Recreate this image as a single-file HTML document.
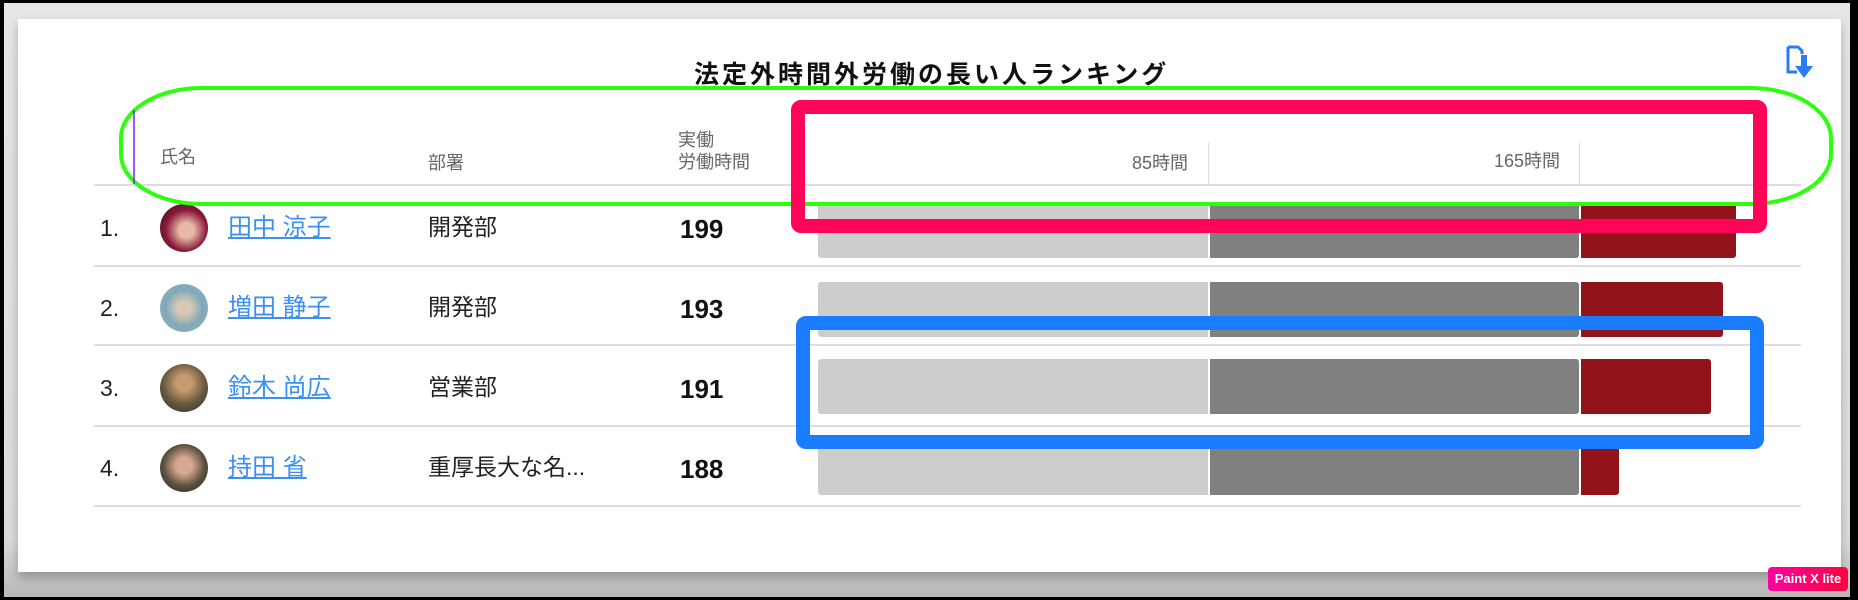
<!DOCTYPE html>
<html><head><meta charset="utf-8"><style>
*{margin:0;padding:0;box-sizing:border-box}
body{width:1858px;height:600px;background:#000;position:relative;overflow:hidden;font-family:"Liberation Sans","Noto Sans CJK JP",sans-serif}
.a{position:absolute}
.frame{left:4px;top:3px;width:1846px;height:594px;background:linear-gradient(#e6e6e6,#dcdcdc 90%,#b8b8b8)}
.card{left:18px;top:19px;width:1823px;height:553px;background:#fff;box-shadow:0 6px 10px rgba(0,0,0,.25)}
.h{color:#666;font-size:18px;line-height:22px}
.line{left:94px;width:1707px;height:2px;background:#ddd}
.num{left:100px;font-size:23px;color:#222;line-height:28px}
.av{left:160px;width:48px;height:48px;border-radius:50%}
.nm{left:228px;font-size:24px;color:#3a8ff2;text-decoration:underline;line-height:28px}
.dp{left:428px;font-size:23px;color:#222;line-height:28px}
.hr{left:680px;font-size:26px;font-weight:bold;color:#111;line-height:28px}
.b1{left:818px;width:390px;height:55px;background:#cdcdcd;border-radius:3px 0 0 3px}
.b2{left:1210px;width:369px;height:55px;background:#808080;border-radius:0 3px 3px 0}
.b3{left:1581px;height:55px;background:#92131a;border-radius:0 3px 3px 0}
</style></head><body>
<div class="a frame"></div>
<div class="a card"></div>
<div class="a" style="left:694px;top:58px;font-size:25px;font-weight:bold;letter-spacing:3px;color:#111;line-height:34px">法定外時間外労働の長い人ランキング</div>
<svg class="a" style="left:1785px;top:45px" width="38" height="38" viewBox="0 0 38 38"><path d="M3 2H13L17 6V9M3 2V27H12" fill="none" stroke="#2a7cf6" stroke-width="3"/><path d="M16 10h6v11h6l-9 12-9-12h6z" fill="#2a7cf6"/></svg>
<div class="a h" style="left:160px;top:146px">氏名</div>
<div class="a h" style="left:428px;top:152px">部署</div>
<div class="a h" style="left:678px;top:129px">実働<br>労働時間</div>
<div class="a h" style="left:1088px;top:152px;width:100px;text-align:right">85時間</div>
<div class="a h" style="left:1450px;top:150px;width:110px;text-align:right">165時間</div>
<div class="a" style="left:1208px;top:142px;width:1px;height:43px;background:#ddd"></div>
<div class="a" style="left:1579px;top:142px;width:1px;height:43px;background:#ddd"></div>
<div class="a line" style="top:184px"></div>
<div class="a line" style="top:265px"></div>
<div class="a line" style="top:344px"></div>
<div class="a line" style="top:425px"></div>
<div class="a line" style="top:505px"></div>

<div class="a num" style="top:214px">1.</div>
<div class="a av" style="top:204px;background:radial-gradient(circle at 55% 55%,#e8b8a8 20%,#8a1a3a 55%,#300818)"></div>
<div class="a nm" style="top:214px">田中 涼子</div>
<div class="a dp" style="top:213px">開発部</div>
<div class="a hr" style="top:215px">199</div>
<div class="a b1" style="top:203px"></div><div class="a b2" style="top:203px"></div><div class="a b3" style="top:203px;width:155px"></div>

<div class="a num" style="top:294px">2.</div>
<div class="a av" style="top:284px;background:radial-gradient(circle at 50% 50%,#d8c8b8 20%,#7fa8b8 55%,#9bb8c8)"></div>
<div class="a nm" style="top:294px">増田 静子</div>
<div class="a dp" style="top:293px">開発部</div>
<div class="a hr" style="top:295px">193</div>
<div class="a b1" style="top:282px"></div><div class="a b2" style="top:282px"></div><div class="a b3" style="top:282px;width:142px"></div>

<div class="a num" style="top:374px">3.</div>
<div class="a av" style="top:364px;background:radial-gradient(circle at 50% 40%,#c89a70 20%,#6a5a40 55%,#2a2a30)"></div>
<div class="a nm" style="top:374px">鈴木 尚広</div>
<div class="a dp" style="top:373px">営業部</div>
<div class="a hr" style="top:375px">191</div>
<div class="a b1" style="top:359px"></div><div class="a b2" style="top:359px"></div><div class="a b3" style="top:359px;width:130px"></div>

<div class="a num" style="top:454px">4.</div>
<div class="a av" style="top:444px;background:radial-gradient(circle at 50% 45%,#d8a890 22%,#5a5040 58%,#2a2820)"></div>
<div class="a nm" style="top:454px">持田 省</div>
<div class="a dp" style="top:453px">重厚長大な名...</div>
<div class="a hr" style="top:455px">188</div>
<div class="a b1" style="top:440px"></div><div class="a b2" style="top:440px"></div><div class="a b3" style="top:440px;width:38px"></div>

<svg class="a" style="left:0;top:0" width="1858" height="600">
<rect x="121" y="88" width="1710" height="116" rx="80" ry="50" fill="none" stroke="#2bff0c" stroke-width="4"/>
<line x1="134" y1="110" x2="134" y2="184" stroke="#7a20ff" stroke-width="1.5"/>
<rect x="798" y="107" width="962" height="119" rx="3" fill="none" stroke="#ff0558" stroke-width="14"/>
<rect x="803" y="323" width="954" height="119" rx="3" fill="none" stroke="#1a7cff" stroke-width="14"/>
</svg>
<div class="a" style="left:1768px;top:567px;width:80px;height:24px;border-radius:4px;background:linear-gradient(90deg,#ff00a0,#ff0040);color:#fff;font-size:13px;font-weight:bold;text-align:center;line-height:24px">Paint X lite</div>
</body></html>
